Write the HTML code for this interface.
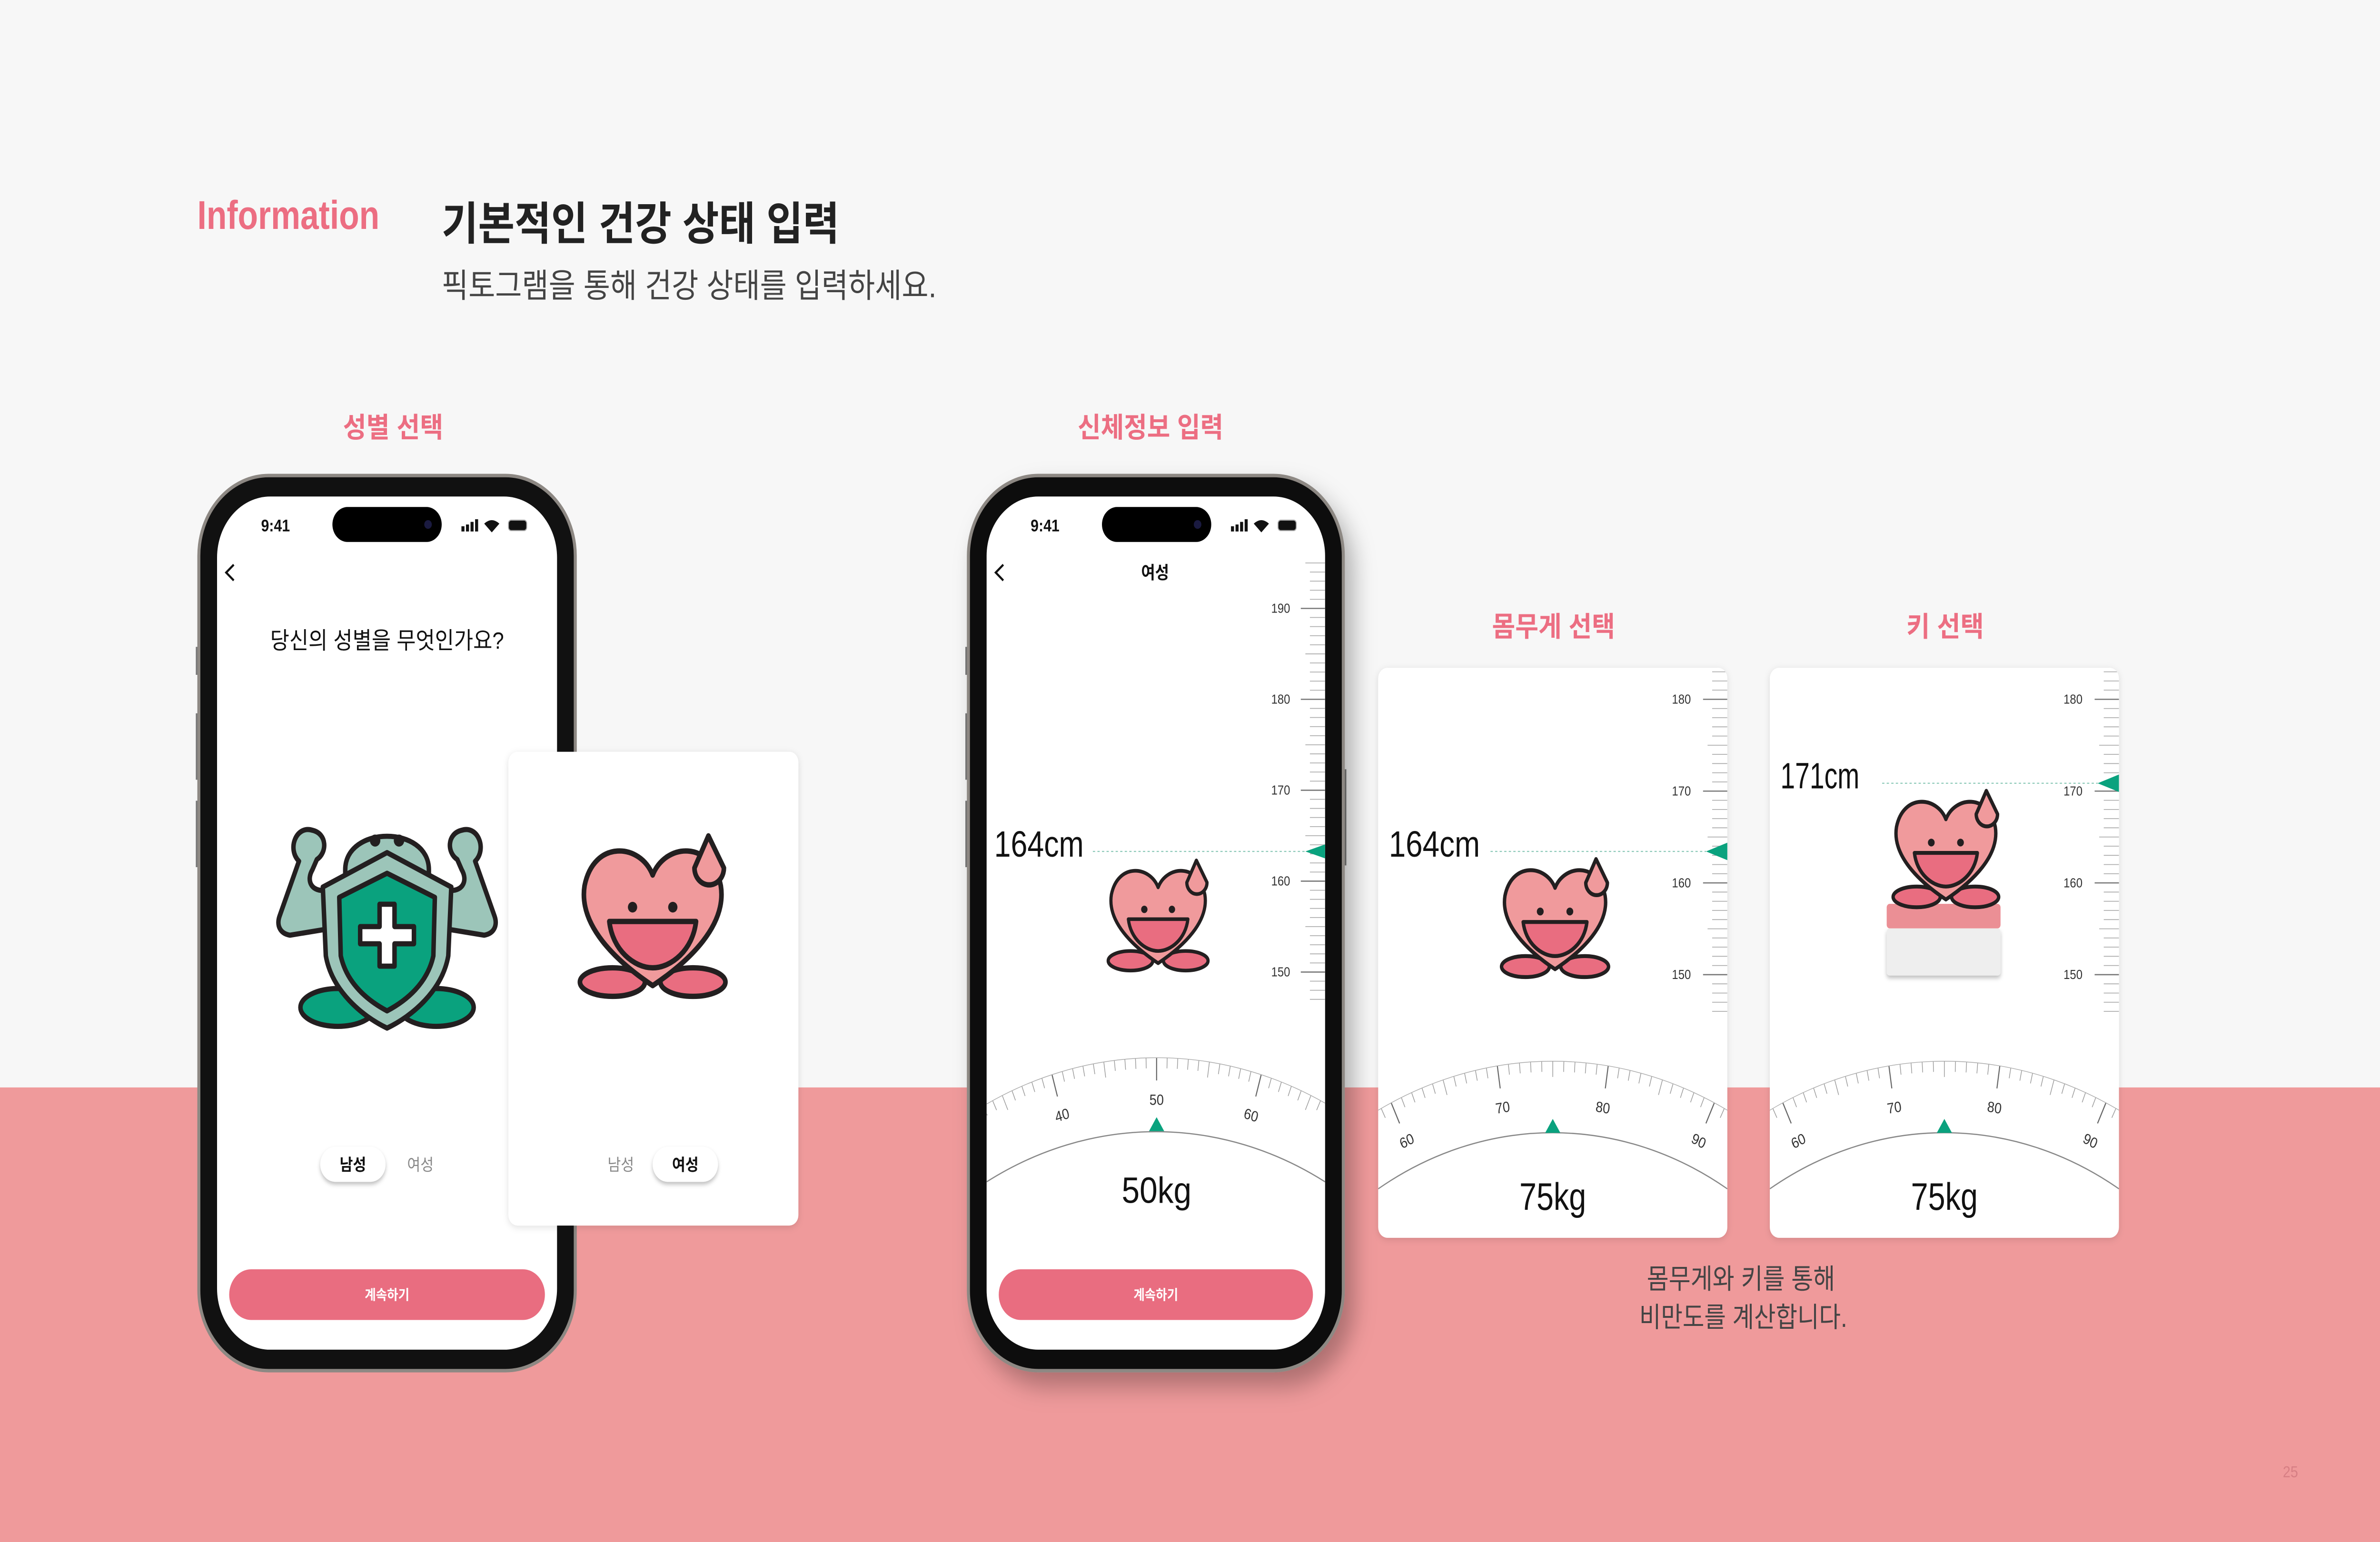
<!DOCTYPE html>
<html><head><meta charset="utf-8">
<style>
html,body{margin:0;padding:0;width:100vw;height:100vh;overflow:hidden;background:#f7f7f7}
#s{display:block;position:fixed;left:0;top:0;width:100vw;height:100vh}
text{font-family:"Liberation Sans","Noto Sans CJK KR",sans-serif}
</style></head>
<body>
<svg id="s" viewBox="0 0 1568 882" preserveAspectRatio="none" xmlns="http://www.w3.org/2000/svg">
<defs>
  <filter id="sh" x="-20%" y="-20%" width="150%" height="150%"><feDropShadow dx="6" dy="8" stdDeviation="7" flood-color="#000" flood-opacity="0.28"/></filter>
  <filter id="sh2" x="-20%" y="-20%" width="140%" height="140%"><feDropShadow dx="0" dy="1" stdDeviation="2" flood-color="#000" flood-opacity="0.12"/></filter>
  <filter id="sh3" x="-50%" y="-50%" width="200%" height="200%"><feDropShadow dx="0" dy="1.5" stdDeviation="1.2" flood-color="#000" flood-opacity="0.25"/></filter>
  <clipPath id="scr2"><rect x="650" y="284" width="223" height="488" rx="34"/></clipPath>
  <clipPath id="cA"><rect x="908" y="382" width="230" height="326" rx="6"/></clipPath>
  <clipPath id="cB"><rect x="1166" y="382" width="230" height="326" rx="6"/></clipPath>
  <symbol id="heart" viewBox="0 0 100 95">
    <g stroke="#231f20" stroke-width="3" stroke-linejoin="round">
      <ellipse cx="24" cy="84" rx="21" ry="8" fill="#e96d80"/>
      <ellipse cx="76" cy="84" rx="21" ry="8" fill="#e96d80"/>
      <path d="M50 24 C42 6 12 4 6 30 C2 52 26 72 50 86 C74 72 98 52 94 30 C88 4 58 6 50 24Z" fill="#f09a9c"/>
      <path d="M86 2 L96 20 A9.5 9.5 0 1 1 77 20 Z" fill="#f09a9c"/>
      <path d="M22 50 H78 C76 66 62 76 50 76 C38 76 24 66 22 50Z" fill="#e96d80"/>
    </g>
    <circle cx="37" cy="42" r="3" fill="#231f20"/><circle cx="63" cy="42" r="3" fill="#231f20"/>
  </symbol>
  <symbol id="shield" viewBox="0 0 150 125">
    <g stroke="#231f20" stroke-width="3" stroke-linejoin="round">
      <ellipse cx="42" cy="110" rx="25" ry="11" fill="#0aa27e"/>
      <ellipse cx="108" cy="110" rx="25" ry="11" fill="#0aa27e"/>
      <path id="arm" d="M52 62 L10 68 C3 67 1 62 3 57 L16 25 C8 18 14 4 25 7 C35 9 35 20 28 24 L25 30 C21 36 24 42 32 42 L52 50Z" fill="#9cc5b9"/>
      <use href="#arm" transform="translate(150,0) scale(-1,1)"/>
      <path d="M47 30 C47 4 103 4 103 30 L103 40 L47 40Z" fill="#9cc5b9"/>
      <path d="M75 20 L118 40 L116 80 C112 100 92 115 75 122 C58 115 38 100 34 80 L32 40Z" fill="#9cc5b9"/>
      <path d="M75 32 L107 46 L106 80 C102 96 88 106 75 112 C62 106 48 96 44 80 L43 46Z" fill="#0aa27e"/>
      <path d="M70 50 H80 V63 H93 V73 H80 V86 H70 V73 H57 V63 H70Z" fill="#fff"/>
    </g>
    <circle cx="67" cy="13" r="3.5" fill="#231f20"/><circle cx="83" cy="13" r="3.5" fill="#231f20"/>
  </symbol>
  <g id="status">
    <rect x="0" y="0" width="72" height="20" rx="10" fill="#000"/>
    <circle cx="63" cy="10" r="2.5" fill="#1a1a40"/>
  </g>
</defs>

<rect x="0" y="0" width="1568" height="882" fill="#f7f7f7"/>
<rect x="0" y="622" width="1568" height="260" fill="#ef9a9b"/>

<text x="130" y="131" font-size="23" fill="#ec6e82" font-weight="600" textLength="120" lengthAdjust="spacingAndGlyphs">Information</text>
<text x="291" y="137" font-size="26" fill="#222" font-weight="bold" textLength="262" lengthAdjust="spacingAndGlyphs">기본적인 건강 상태 입력</text>
<text x="291" y="170" font-size="19" fill="#444" textLength="326" lengthAdjust="spacingAndGlyphs">픽토그램을 통해 건강 상태를 입력하세요.</text>

<g font-size="16" fill="#ec6e82" font-weight="600" text-anchor="middle">
<text x="259" y="250" textLength="66" lengthAdjust="spacingAndGlyphs">성별 선택</text>
<text x="758" y="250" textLength="96" lengthAdjust="spacingAndGlyphs">신체정보 입력</text>
<text x="1023.5" y="364" textLength="81" lengthAdjust="spacingAndGlyphs">몸무게 선택</text>
<text x="1281.5" y="364" textLength="51" lengthAdjust="spacingAndGlyphs">키 선택</text>
</g>

<!-- PHONE 1 -->
<g>
  <rect x="129" y="370" width="3" height="16" fill="#777"/><rect x="129" y="408" width="3" height="38" fill="#777"/><rect x="129" y="458" width="3" height="38" fill="#777"/>
  <rect x="378" y="440" width="3" height="55" fill="#777"/>
  <rect x="131" y="272" width="248" height="512" rx="46" fill="#111" stroke="#8d8883" stroke-width="2"/>
  <rect x="143" y="284" width="224" height="488" rx="35" fill="#fff"/>
  <text x="172" y="304" font-size="9.5" font-weight="bold" fill="#111">9:41</text>
  <use href="#status" x="219" y="290"/>
  <g fill="#111"><rect x="304" y="301" width="2" height="3"/><rect x="307" y="300" width="2" height="4"/><rect x="310" y="298.5" width="2" height="5.5"/><rect x="313" y="297" width="2" height="7"/></g>
  <path d="M319 299.5 Q324 295.5 329 299.5 L324 304.5Z" fill="#111"/>
  <rect x="335" y="297.5" width="12" height="6" rx="1.8" fill="#111" stroke="#aaa" stroke-width="0.6"/>
  <path d="M154 323 L149 327.5 L154 332" fill="none" stroke="#111" stroke-width="1.3"/>
  <text x="255" y="371" font-size="13.5" fill="#111" text-anchor="middle" textLength="154" lengthAdjust="spacingAndGlyphs">당신의 성별을 무엇인가요?</text>
  <use href="#shield" x="181" y="468" width="148" height="123"/>
  <rect x="211" y="656" width="43" height="20" rx="10" fill="#fff" filter="url(#sh3)"/>
  <text x="232.5" y="669.5" font-size="9.5" font-weight="bold" fill="#111" text-anchor="middle">남성</text>
  <text x="277" y="669.5" font-size="9.5" fill="#888" text-anchor="middle">여성</text>
  <rect x="151" y="726" width="208" height="29" rx="14.5" fill="#e96d80"/>
  <text x="255" y="743.5" font-size="8" font-weight="bold" fill="#fff" text-anchor="middle">계속하기</text>
</g>

<rect x="335" y="430" width="191" height="271" rx="6" fill="#fff" filter="url(#sh2)"/>
<use href="#heart" x="379" y="472" width="102" height="105"/>
<text x="409" y="669.5" font-size="9.5" fill="#888" text-anchor="middle">남성</text>
<rect x="430" y="656" width="43" height="20" rx="10" fill="#fff" filter="url(#sh3)"/>
<text x="451.5" y="669.5" font-size="9.5" font-weight="bold" fill="#111" text-anchor="middle">여성</text>

<!-- PHONE 2 -->
<g>
  <rect x="636" y="370" width="3" height="16" fill="#777"/><rect x="636" y="408" width="3" height="38" fill="#777"/><rect x="636" y="458" width="3" height="38" fill="#777"/>
  <rect x="884" y="440" width="3" height="55" fill="#777"/>
  <rect x="638" y="272" width="247" height="512" rx="46" fill="#111" stroke="#8d8883" stroke-width="2" filter="url(#sh)"/>
  <rect x="650" y="284" width="223" height="488" rx="34" fill="#fff"/>
  <text x="679" y="304" font-size="9.5" font-weight="bold" fill="#111">9:41</text>
  <use href="#status" x="726" y="290"/>
  <g fill="#111"><rect x="811" y="301" width="2" height="3"/><rect x="814" y="300" width="2" height="4"/><rect x="817" y="298.5" width="2" height="5.5"/><rect x="820" y="297" width="2" height="7"/></g>
  <path d="M826 299.5 Q831 295.5 836 299.5 L831 304.5Z" fill="#111"/>
  <rect x="842" y="297.5" width="12" height="6" rx="1.8" fill="#111" stroke="#aaa" stroke-width="0.6"/>
  <path d="M661 323 L656 327.5 L661 332" fill="none" stroke="#111" stroke-width="1.3"/>
  <text x="761" y="331" font-size="10" font-weight="bold" fill="#111" text-anchor="middle">여성</text>
  <g clip-path="url(#scr2)" id="p2g"></g>
  <text x="655" y="490" font-size="21" fill="#111" textLength="59" lengthAdjust="spacingAndGlyphs">164cm</text>
  <line x1="720" y1="487" x2="860" y2="487" stroke="#8cc9b8" stroke-width="0.6" stroke-dasharray="1.5 1.5"/>
  <polygon points="860,487 873,483 873,491" fill="#0aa27e"/>
  <use href="#heart" x="728" y="489" width="70" height="70"/>
  <polygon points="757,647 767,647 762,639" fill="#0aa27e"/>
  <text x="762" y="688" font-size="21" fill="#111" text-anchor="middle" textLength="46" lengthAdjust="spacingAndGlyphs">50kg</text>
  <rect x="658" y="726" width="207" height="29" rx="14.5" fill="#e96d80"/>
  <text x="761.5" y="743.5" font-size="8" font-weight="bold" fill="#fff" text-anchor="middle">계속하기</text>
</g>

<rect x="908" y="382" width="230" height="326" rx="6" fill="#fff" filter="url(#sh2)"/>
<g clip-path="url(#cA)" id="cAg"></g>
<text x="915" y="490" font-size="21" fill="#111" textLength="60" lengthAdjust="spacingAndGlyphs">164cm</text>
<line x1="982" y1="487" x2="1124" y2="487" stroke="#8cc9b8" stroke-width="0.6" stroke-dasharray="1.5 1.5"/>
<polygon points="1124,487 1138,482 1138,492" fill="#0aa27e"/>
<use href="#heart" x="987" y="489" width="75" height="73"/>
<polygon points="1018,648 1028,648 1023,640" fill="#0aa27e"/>
<text x="1023" y="692" font-size="22" fill="#111" text-anchor="middle" textLength="44" lengthAdjust="spacingAndGlyphs">75kg</text>

<rect x="1166" y="382" width="230" height="326" rx="6" fill="#fff" filter="url(#sh2)"/>
<g clip-path="url(#cB)" id="cBg"></g>
<text x="1173" y="451" font-size="21" fill="#111" textLength="52" lengthAdjust="spacingAndGlyphs">171cm</text>
<line x1="1240" y1="448" x2="1382" y2="448" stroke="#8cc9b8" stroke-width="0.6" stroke-dasharray="1.5 1.5"/>
<polygon points="1382,448 1396,443 1396,453" fill="#0aa27e"/>
<rect x="1243" y="531" width="75" height="27" rx="2" fill="#eeeeee" filter="url(#sh3)"/>
<rect x="1243" y="517" width="75" height="14" rx="2" fill="#eb8f95"/>
<use href="#heart" x="1245" y="450" width="74" height="72"/>
<polygon points="1276,648 1286,648 1281,640" fill="#0aa27e"/>
<text x="1281" y="692" font-size="22" fill="#111" text-anchor="middle" textLength="44" lengthAdjust="spacingAndGlyphs">75kg</text>

<g font-size="16" fill="#444" text-anchor="middle">
<text x="1147" y="737" textLength="124" lengthAdjust="spacingAndGlyphs">몸무게와 키를 통해</text>
<text x="1148.5" y="759" textLength="137" lengthAdjust="spacingAndGlyphs">비만도를 계산합니다.</text>
</g>
<text x="1509" y="845" font-size="9" fill="#d77f84" text-anchor="middle">25</text>

<script>
var NS="http://www.w3.org/2000/svg";
function el(g,t,a,txt){var e=document.createElementNS(NS,t);for(var k in a)e.setAttribute(k,a[k]);if(txt!=null)e.textContent=txt;g.appendChild(e);return e;}
function vruler(g,xR,y0,v0,ppu,vmin,vmax,lx){
  for(var v=vmin;v<=vmax;v++){var y=y0+(v0-v)*ppu;var len=(v%10==0)?16:(v%5==0)?13:10;
    el(g,'line',{x1:xR-len,y1:y,x2:xR,y2:y,stroke:(v%10==0)?'#777':'#aaa','stroke-width':(v%10==0)?0.7:0.45});
    if(v%10==0)el(g,'text',{x:lx,y:y+2.5,'font-size':7.5,fill:'#333','text-anchor':'end'},String(v));}
}
function gauge(g,cx,top,R,dpu,c,vmin,vmax,lr){
  var cy=top+R;
  for(var v=vmin;v<=vmax;v++){var th=(v-c)*dpu*Math.PI/180;var s=Math.sin(th),co=Math.cos(th);
    var len=(v%10==0)?13:(v%5==0)?9:6;
    el(g,'line',{x1:cx+R*s,y1:cy-R*co,x2:cx+(R-len)*s,y2:cy-(R-len)*co,stroke:(v%10==0)?'#666':'#999','stroke-width':(v%10==0)?0.7:0.45});
    if(v%10==0){var lx=cx+lr*s,ly=cy-lr*co;
      el(g,'text',{x:lx,y:ly+3,'font-size':8.5,fill:'#333','text-anchor':'middle',transform:'rotate('+((v-c)*dpu)+' '+lx+' '+ly+')'},String(v));}
  }
  var a=(vmax-c)*dpu*Math.PI/180;
  el(g,'path',{d:'M'+(cx-R*Math.sin(a))+' '+(cy-R*Math.cos(a))+' A'+R+' '+R+' 0 0 1 '+(cx+R*Math.sin(a))+' '+(cy-R*Math.cos(a)),fill:'none',stroke:'#aaa','stroke-width':0.4});
}
var p2=document.getElementById('p2g');
vruler(p2,873,348,190,5.2,147,195,850);
gauge(p2,762,605,250,1.6,50,32,68,226);
el(p2,'path',{d:'M650 676 A231 231 0 0 1 873 676',fill:'none',stroke:'#888','stroke-width':0.7});
var a=document.getElementById('cAg');
vruler(a,1138,400,180,5.25,146,184,1114);
gauge(a,1023,607,250,1.68,75,57,93,226);
el(a,'path',{d:'M908 680 A222 222 0 0 1 1138 680',fill:'none',stroke:'#888','stroke-width':0.7});
var b=document.getElementById('cBg');
vruler(b,1396,400,180,5.25,146,184,1372);
gauge(b,1281,607,250,1.68,75,57,93,226);
el(b,'path',{d:'M1166 680 A222 222 0 0 1 1396 680',fill:'none',stroke:'#888','stroke-width':0.7});
</script>
</svg>
</body></html>
